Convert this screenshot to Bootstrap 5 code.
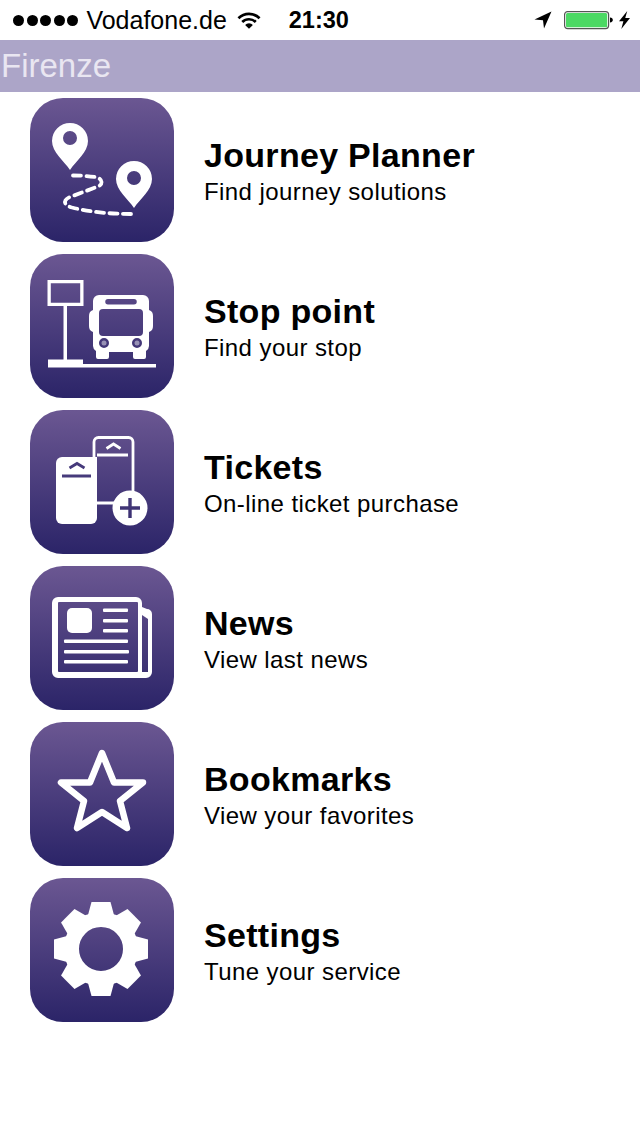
<!DOCTYPE html>
<html lang="en">
<head>
<meta charset="utf-8">
<title>Firenze</title>
<link href="https://cdn.jsdelivr.net/npm/bootstrap@5.3.0/dist/css/bootstrap.min.css" rel="stylesheet">
<style>
html,body{height:100%;background:#fff;}
body{font-family:"Liberation Sans",Arial,sans-serif;color:#000;}
.status-strip{height:40px;font-size:25px;line-height:40px;}
.signal-dots{gap:2.6px;margin-left:13px;margin-right:8px;}
.signal-dots i{display:block;width:11px;height:11px;border-radius:50%;background:#000;}
.wifi-glyph{margin-left:10px;width:24px;height:18px;}
.clock-text{margin-left:28px;font-weight:700;font-size:23.5px;}
.arrow-glyph{width:18px;height:18px;}
.battery-glyph{width:50px;height:20px;margin-left:12px;}
.bolt-glyph{width:11px;height:18px;margin-left:5px;margin-right:10px;}
.title-strip{height:52px;background:#aca5c8;padding:0 0 0 1px!important;}
.title-text{color:#e9e6f1;font-size:33px;line-height:52px;padding:0;margin:0;}
.menu-stack{padding-top:6px;gap:12px;}
.menu-row{padding:0 0 0 30px;gap:30px;background:transparent;color:#000;}
.menu-tile{width:144px;height:144px;border-radius:33px;background:linear-gradient(#6b5792,#2b2468);flex:none;display:block;}
.menu-name{font-size:34px;line-height:38px;font-weight:700;margin:0;color:#000;letter-spacing:.3px;}
.menu-note{font-size:24px;line-height:30px;margin:3px 0 -3px;color:#000;letter-spacing:.42px;}
</style>
</head>
<body>
<div class="status-strip d-flex align-items-center">
  <div class="signal-dots d-flex"><i></i><i></i><i></i><i></i><i></i></div>
  <span>Vodafone.de</span>
  <svg class="wifi-glyph" viewBox="0 0 24 18"><path d="M0.5 6.2A16.5 16.5 0 0 1 23.5 6.2L21.6 8.2A13.8 13.8 0 0 0 2.4 8.2Z"/><path d="M4.3 10.1A11 11 0 0 1 19.7 10.1L17.8 12A8.2 8.2 0 0 0 6.2 12Z"/><path d="M8.1 13.9A5.5 5.5 0 0 1 15.9 13.9L12 17.8Z"/></svg>
  <span class="clock-text">21:30</span>
  <div class="ms-auto d-flex align-items-center">
    <svg class="arrow-glyph" viewBox="0 0 18 18"><path d="M17.5 0.5L0.5 8.5L9 9.2L10 17.5Z"/></svg>
    <svg class="battery-glyph" viewBox="0 0 50 20"><rect x="0.6" y="1.600" width="44" height="17" rx="3" fill="none" stroke="#555" stroke-width="1.200"/><rect x="2" y="3" width="41.200" height="14.200" rx="1.500" fill="#4cd964"/><path d="M46 7.500C48 7.800 48.800 8.700 48.800 10S48 12.200 46 12.500Z"/></svg>
    <svg class="bolt-glyph" viewBox="0 0 12 20" preserveAspectRatio="none"><path d="M9 0L0 11.500H4.800L2.500 20L12 7.800H6.800Z"/></svg>
  </div>
</div>
<nav class="navbar title-strip"><h1 class="title-text fw-normal">Firenze</h1></nav>
<div class="list-group list-group-flush menu-stack">
  <a href="#" class="list-group-item border-0 menu-row d-flex align-items-center">
    <svg class="menu-tile" viewBox="0 0 144 144">
      <path fill="#fff" fill-rule="evenodd" d="M40 25A18 18 0 0 1 58 43C58 54 46 63 40 72C34 63 22 54 22 43A18 18 0 0 1 40 25ZM40 33A7 7 0 1 0 40 47A7 7 0 1 0 40 33Z"/>
      <path fill="#fff" fill-rule="evenodd" d="M104 63A18 18 0 0 1 122 81C122 92 110 101 104 110C98 101 86 92 86 81A18 18 0 0 1 104 63ZM104 73A7 7 0 1 0 104 87A7 7 0 1 0 104 73Z"/>
      <path fill="none" stroke="#fff" stroke-width="3.800" stroke-dasharray="8 5.500" stroke-linecap="round" d="M43 77.500C50 77.500 58 78 65 79C72 80 74 86 68 88.500L40 99C33 102 33 107 42 109.500C60 114 80 116 102 116"/>
    </svg>
    <div><p class="menu-name">Journey Planner</p><p class="menu-note">Find journey solutions</p></div>
  </a>
  <a href="#" class="list-group-item border-0 menu-row d-flex align-items-center">
    <svg class="menu-tile" viewBox="0 0 144 144">
      <path fill="#fff" fill-rule="evenodd" d="M17.500 26H53.500V52H37V105.500H53V110H126V113.500H18V105.500H33.500V52H17.500ZM20.800 29.300V48.700H50.200V29.300Z"/>
      <path fill="#fff" fill-rule="evenodd" d="M69 41H113A6 6 0 0 1 119 47V56C122 57 123 59 123 62V72C123 75 122 77 119 78V92A6 6 0 0 1 116 97V103A2 2 0 0 1 114 105H105A2 2 0 0 1 103 103V98H79V103A2 2 0 0 1 77 105H68A2 2 0 0 1 66 103V97A6 6 0 0 1 63 92V78C60 77 59 75 59 72V62C59 59 60 57 63 56V47A6 6 0 0 1 69 41ZM78 45A2.500 2.500 0 0 0 78 50.500H104A2.500 2.500 0 0 0 104 45ZM73 55A4 4 0 0 0 69 59V78A4 4 0 0 0 73 82H109A4 4 0 0 0 113 78V59A4 4 0 0 0 109 55ZM74 84A5 5 0 1 0 74 94A5 5 0 1 0 74 84ZM107 84A5 5 0 1 0 107 94A5 5 0 1 0 107 84Z"/>
      <circle cx="74" cy="89" r="2.500" fill="#fff" opacity=".45"/><circle cx="107" cy="89" r="2.500" fill="#fff" opacity=".45"/>
    </svg>
    <div><p class="menu-name">Stop point</p><p class="menu-note">Find your stop</p></div>
  </a>
  <a href="#" class="list-group-item border-0 menu-row d-flex align-items-center">
    <svg class="menu-tile" viewBox="0 0 144 144">
      <path fill="none" stroke="#fff" stroke-width="2.800" d="M64 47V32A4.500 4.500 0 0 1 68.500 27.500H98.500A4.500 4.500 0 0 1 103 32V85M67 93H88"/>
      <path fill="none" stroke="#fff" stroke-width="2.800" d="M67 45H98M76.500 38.500L83.500 34L90.500 38.500"/>
      <path fill="#fff" d="M32 47H67V108A6 6 0 0 1 61 114H32A6 6 0 0 1 26 108V53A6 6 0 0 1 32 47Z"/>
      <path fill="none" stroke="#463a7b" stroke-width="2.800" d="M32 66H61M39.500 58L47 53.500L54.500 58"/>
      <path fill="#fff" fill-rule="evenodd" d="M100 80.500A17.500 17.500 0 1 0 100 115.500A17.500 17.500 0 1 0 100 80.500ZM98.300 88H101.700V96.300H110V99.700H101.700V108H98.300V99.700H90V96.300H98.300Z"/>
    </svg>
    <div><p class="menu-name">Tickets</p><p class="menu-note">On-line ticket purchase</p></div>
  </a>
  <a href="#" class="list-group-item border-0 menu-row d-flex align-items-center">
    <svg class="menu-tile" viewBox="0 0 144 144">
      <path fill="#fff" fill-rule="evenodd" d="M28 31H106A6 6 0 0 1 112 37V41L117 43A5 5 0 0 1 122 48V106A6 6 0 0 1 116 112H28A6 6 0 0 1 22 106V37A6 6 0 0 1 28 31ZM29 36A1 1 0 0 0 28 37V105A1 1 0 0 0 29 106H107A1 1 0 0 0 108 105V37A1 1 0 0 0 107 36ZM112 49V106H118V53Z"/>
      <g fill="#fff">
        <rect x="37" y="42" width="25" height="25" rx="5"/>
        <rect x="73" y="42.500" width="25" height="3.500" rx="1"/><rect x="73" y="53" width="25" height="3.500" rx="1"/><rect x="73" y="63" width="25" height="3.500" rx="1"/>
        <rect x="34" y="73.500" width="64" height="3.500" rx="1"/><rect x="34" y="84" width="65" height="3.500" rx="1"/><rect x="34" y="94" width="64" height="3.500" rx="1"/>
      </g>
    </svg>
    <div><p class="menu-name">News</p><p class="menu-note">View last news</p></div>
  </a>
  <a href="#" class="list-group-item border-0 menu-row d-flex align-items-center">
    <svg class="menu-tile" viewBox="0 0 144 144">
      <path fill="none" stroke="#fff" stroke-width="6.500" stroke-linejoin="round" d="M72 31L84 60.500H113L90 79L97 106L72 90L47 106L54 79L31 60.500H60Z"/>
    </svg>
    <div><p class="menu-name">Bookmarks</p><p class="menu-note">View your favorites</p></div>
  </a>
  <a href="#" class="list-group-item border-0 menu-row d-flex align-items-center">
    <svg class="menu-tile" viewBox="0 0 144 144">
      <g transform="translate(71 71)" fill="#fff">
        <circle r="29.500" fill="none" stroke="#fff" stroke-width="15"/>
        <path d="M-13-34L-9.500-47H9.500L13-34Z"/>
        <path transform="rotate(45)" d="M-13-34L-9.500-47H9.500L13-34Z"/>
        <path transform="rotate(90)" d="M-13-34L-9.500-47H9.500L13-34Z"/>
        <path transform="rotate(135)" d="M-13-34L-9.500-47H9.500L13-34Z"/>
        <path transform="rotate(180)" d="M-13-34L-9.500-47H9.500L13-34Z"/>
        <path transform="rotate(225)" d="M-13-34L-9.500-47H9.500L13-34Z"/>
        <path transform="rotate(270)" d="M-13-34L-9.500-47H9.500L13-34Z"/>
        <path transform="rotate(315)" d="M-13-34L-9.500-47H9.500L13-34Z"/>
      </g>
    </svg>
    <div><p class="menu-name">Settings</p><p class="menu-note">Tune your service</p></div>
  </a>
</div>
<script src="https://cdn.jsdelivr.net/npm/bootstrap@5.3.0/dist/js/bootstrap.bundle.min.js"></script>
</body>
</html>
